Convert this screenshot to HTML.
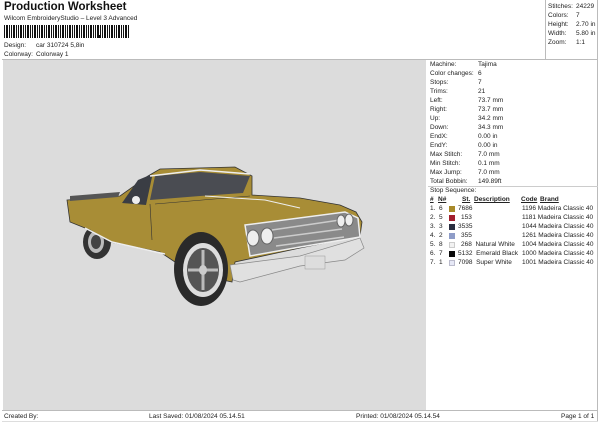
<!DOCTYPE html>
<html><head><style>
*{margin:0;padding:0;box-sizing:border-box}
body{width:600px;height:424px;background:#fff;font-family:"Liberation Sans",Arial,sans-serif;font-size:6.5px;color:#222;position:relative;overflow:hidden}
.a{position:absolute;white-space:nowrap}
.r{position:absolute;left:430px;white-space:nowrap}
.v{position:absolute;left:478px}
</style></head><body>
<div class="a" style="left:4px;top:1px;font-size:11.5px;font-weight:bold;color:#111">Production Worksheet</div>
<div class="a" style="left:4px;top:15px">Wilcom EmbroideryStudio – Level 3 Advanced</div>
<div class="a" style="left:4px;top:25px;width:125px;height:13px;background:repeating-linear-gradient(90deg,#111 0 1px,#fff 1px 2px,#111 2px 4px,#fff 4px 5px,#111 5px 6px,#fff 6px 7px)"></div>
<div class="a" style="left:99px;top:35px;width:2px;height:3px;background:#111"></div>
<div class="a" style="left:4px;top:42px">Design:</div><div class="a" style="left:36px;top:42px">car 310724 5,8in</div>
<div class="a" style="left:4px;top:51px">Colorway:</div><div class="a" style="left:36px;top:51px">Colorway 1</div>
<div class="a" style="left:545px;top:0;width:1px;height:60px;background:#bbb"></div>
<div class="a" style="left:597px;top:0;width:1px;height:422px;background:#bbb"></div>
<div class="a" style="left:2px;top:59px;width:596px;height:1px;background:#bbb"></div>
<div class="a" style="left:548px;top:3px">Stitches:</div><div class="a" style="left:576px;top:3px">24229</div>
<div class="a" style="left:548px;top:12px">Colors:</div><div class="a" style="left:576px;top:12px">7</div>
<div class="a" style="left:548px;top:21px">Height:</div><div class="a" style="left:576px;top:21px">2.70 in</div>
<div class="a" style="left:548px;top:30px">Width:</div><div class="a" style="left:576px;top:30px">5.80 in</div>
<div class="a" style="left:548px;top:39px">Zoom:</div><div class="a" style="left:576px;top:39px">1:1</div>
<div class="a" style="left:3px;top:60px;width:423px;height:351px;background:#dcdcdc"></div>
<div class="a" style="left:2px;top:410px;width:596px;height:1px;background:#bbb"></div>
<div class="a" style="left:2px;top:421px;width:596px;height:1px;background:#ddd"></div>
<div class="a" style="left:4px;top:413px">Created By:</div>
<div class="a" style="left:149px;top:413px">Last Saved: 01/08/2024 05.14.51</div>
<div class="a" style="left:356px;top:413px">Printed: 01/08/2024 05.14.54</div>
<div class="a" style="left:561px;top:413px">Page 1 of 1</div>
<div class="r" style="top:61px">Machine:</div><div class="v" style="top:61px">Tajima</div>
<div class="r" style="top:70px">Color changes:</div><div class="v" style="top:70px">6</div>
<div class="r" style="top:79px">Stops:</div><div class="v" style="top:79px">7</div>
<div class="r" style="top:88px">Trims:</div><div class="v" style="top:88px">21</div>
<div class="r" style="top:97px">Left:</div><div class="v" style="top:97px">73.7 mm</div>
<div class="r" style="top:106px">Right:</div><div class="v" style="top:106px">73.7 mm</div>
<div class="r" style="top:115px">Up:</div><div class="v" style="top:115px">34.2 mm</div>
<div class="r" style="top:124px">Down:</div><div class="v" style="top:124px">34.3 mm</div>
<div class="r" style="top:133px">EndX:</div><div class="v" style="top:133px">0.00 in</div>
<div class="r" style="top:142px">EndY:</div><div class="v" style="top:142px">0.00 in</div>
<div class="r" style="top:151px">Max Stitch:</div><div class="v" style="top:151px">7.0 mm</div>
<div class="r" style="top:160px">Min Stitch:</div><div class="v" style="top:160px">0.1 mm</div>
<div class="r" style="top:169px">Max Jump:</div><div class="v" style="top:169px">7.0 mm</div>
<div class="r" style="top:178px">Total Bobbin:</div><div class="v" style="top:178px">149.89ft</div>
<div class="a" style="left:428px;top:186px;width:170px;height:1px;background:#ccc"></div>
<div class="r" style="top:187px">Stop Sequence:</div>
<div class="r" style="top:196px;font-weight:bold;text-decoration:underline">#</div>
<div class="a" style="left:438px;top:196px;font-weight:bold;text-decoration:underline">N#</div>
<div class="a" style="left:462px;top:196px;font-weight:bold;text-decoration:underline">St.</div>
<div class="a" style="left:474px;top:196px;font-weight:bold;text-decoration:underline">Description</div>
<div class="a" style="left:521px;top:196px;font-weight:bold;text-decoration:underline">Code</div>
<div class="a" style="left:540px;top:196px;font-weight:bold;text-decoration:underline">Brand</div>
<div style="position:absolute;left:0;top:205px">
<div class="a" style="left:430px;top:0">1.&nbsp;&nbsp;6</div><div class="a" style="left:449px;top:1px;width:6px;height:6px;background:#a88a2a"></div><div class="a" style="left:458px;top:0">7686</div><div class="a" style="left:522px;top:0">1196&nbsp;Madeira Classic 40</div>
<div class="a" style="left:430px;top:9px">2.&nbsp;&nbsp;5</div><div class="a" style="left:449px;top:10px;width:6px;height:6px;background:#a21f2e"></div><div class="a" style="left:461px;top:9px">153</div><div class="a" style="left:522px;top:9px">1181&nbsp;Madeira Classic 40</div>
<div class="a" style="left:430px;top:18px">3.&nbsp;&nbsp;3</div><div class="a" style="left:449px;top:19px;width:6px;height:6px;background:#2a2e40"></div><div class="a" style="left:458px;top:18px">3535</div><div class="a" style="left:522px;top:18px">1044&nbsp;Madeira Classic 40</div>
<div class="a" style="left:430px;top:27px">4.&nbsp;&nbsp;2</div><div class="a" style="left:449px;top:28px;width:6px;height:6px;background:#8e9cc8"></div><div class="a" style="left:461px;top:27px">355</div><div class="a" style="left:522px;top:27px">1261&nbsp;Madeira Classic 40</div>
<div class="a" style="left:430px;top:36px">5.&nbsp;&nbsp;8</div><div class="a" style="left:449px;top:37px;width:6px;height:6px;background:#f2f2f2;border:1px solid #ccc"></div><div class="a" style="left:461px;top:36px">268&nbsp; Natural White</div><div class="a" style="left:522px;top:36px">1004&nbsp;Madeira Classic 40</div>
<div class="a" style="left:430px;top:45px">6.&nbsp;&nbsp;7</div><div class="a" style="left:449px;top:46px;width:6px;height:6px;background:#0a0a0a"></div><div class="a" style="left:458px;top:45px">5132&nbsp; Emerald Black</div><div class="a" style="left:522px;top:45px">1000&nbsp;Madeira Classic 40</div>
<div class="a" style="left:430px;top:54px">7.&nbsp;&nbsp;1</div><div class="a" style="left:449px;top:55px;width:6px;height:6px;background:#e6e8f6;border:1px solid #bbc"></div><div class="a" style="left:458px;top:54px">7098&nbsp; Super White</div><div class="a" style="left:522px;top:54px">1001&nbsp;Madeira Classic 40</div>
</div>
<svg class="a" style="left:0;top:0" width="600" height="424" viewBox="0 0 600 424">
<ellipse cx="97" cy="242" rx="14" ry="17" fill="#333"/>
<ellipse cx="96" cy="242" rx="8" ry="11" fill="#bbb"/><ellipse cx="96" cy="242" rx="5" ry="7" fill="#444"/>
<path d="M67 200 L120 196 L148 176 L160 169 L235 167 L252 176 L252 195 L300 198 L340 205 L356 212 L362 222 L360 236 L300 248 L235 262 L232 282 L200 275 L175 262 L160 252 L110 242 L90 230 L70 222 Z" fill="#a88d36" stroke="#333" stroke-width="0.8"/>
<path d="M70 196 L120 192 L118 197 L70 201Z" fill="#555"/>
<path d="M122 203 L138 180 L150 175 L152 177 L146 205 Z" fill="#3a3d44"/>
<path d="M155 176 L200 172 L250 176 L243 193 L200 196 L150 200 Z" fill="#4a4c52"/>
<path d="M150 176 L200 170 L250 174" stroke="#eee" fill="none" stroke-width="1.5"/>
<circle cx="136" cy="200" r="4" fill="#eee"/>
<path d="M150 204 L152 240 M155 204 L250 196" stroke="#333" stroke-width="0.6" fill="none"/>
<path d="M205 196 L265 200 L300 208" stroke="#eee" stroke-width="1" fill="none"/>
<path d="M245 225 L345 212 L358 218 L360 237 L300 247 L250 256 Z" fill="#8a8a8a" stroke="#eee" stroke-width="1.5"/>
<path d="M272 230 L340 220 M274 238 L342 229 M276 246 L344 237" stroke="#ccc" stroke-width="1.5"/>
<ellipse cx="253" cy="238" rx="6" ry="8" fill="#eee" stroke="#666"/><ellipse cx="267" cy="236" rx="6" ry="8" fill="#eee" stroke="#666"/>
<ellipse cx="341" cy="221" rx="4" ry="6" fill="#eee" stroke="#666"/><ellipse cx="349" cy="220" rx="4" ry="6" fill="#eee" stroke="#666"/>
<path d="M230 265 L300 256 L360 238 L364 248 L345 260 L300 266 L240 282 L233 280 Z" fill="#e0e0e0" stroke="#888" stroke-width="0.7"/>
<rect x="305" y="256" width="20" height="13" fill="#ddd" stroke="#999" stroke-width="0.5"/>
<ellipse cx="201" cy="269" rx="27" ry="37" fill="#2a2a2a"/>
<ellipse cx="203" cy="270" rx="20" ry="27" fill="#ddd"/>
<ellipse cx="203" cy="270" rx="16" ry="22" fill="#555"/>
<path d="M203 250 L203 290 M188 270 L218 270" stroke="#bbb" stroke-width="3"/>
<ellipse cx="203" cy="270" rx="4" ry="5" fill="#ccc"/>
<path d="M165 254 L112 242 L85 228" stroke="#eee" stroke-width="1.5" fill="none"/>
</svg>
</body></html>
